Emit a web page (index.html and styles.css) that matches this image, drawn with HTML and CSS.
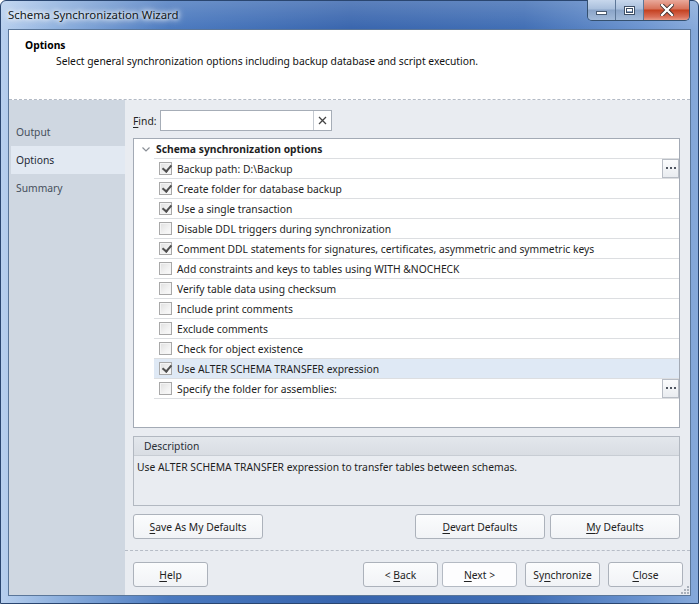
FILE: index.html
```html
<!DOCTYPE html>
<html>
<head>
<meta charset="utf-8">
<link rel="stylesheet" href="styles.css">
</head>
<body>
<div class="window">
  <div class="titlebar">
    <span class="title">Schema Synchronization Wizard</span>
    <div class="caption">
      <div class="cbtn cmin"><span class="min-glyph"></span></div>
      <div class="cbtn cmax"><span class="max-glyph"></span></div>
      <div class="cbtn cclose">
        <svg width="14" height="12" viewBox="0 0 14 12"><path d="M2 1 L12 11 M12 1 L2 11" stroke="#3a2a2a" stroke-width="4" stroke-linecap="square"/><path d="M2 1 L12 11 M12 1 L2 11" stroke="#ffffff" stroke-width="2.4" stroke-linecap="square"/></svg>
      </div>
    </div>
  </div>
  <div class="client">
    <div class="header">
      <div class="h-title">Options</div>
      <div class="h-sub">Select general synchronization options including backup database and script execution.</div>
    </div>
    <div class="body">
      <nav class="sidebar">
        <div class="nav-item">Output</div>
        <div class="nav-item selected">Options</div>
        <div class="nav-item">Summary</div>
      </nav>
      <div class="main">
        <div class="content">
          <div class="find-row">
            <label class="find-label"><u>F</u>ind:</label>
            <div class="find-box">
              <div class="find-input"></div>
              <div class="find-clear">
                <svg width="9" height="9" viewBox="0 0 9 9"><path d="M1 1 L8 8 M8 1 L1 8" stroke="#444" stroke-width="1.3"/></svg>
              </div>
            </div>
          </div>
          <div class="list">
            <div class="group-row">
              <svg class="chev" width="8" height="5" viewBox="0 0 8 5"><path d="M0.5 0.5 L4 4 L7.5 0.5" fill="none" stroke="#8a8f96" stroke-width="1.2"/></svg>
              <span class="group-title">Schema synchronization options</span>
            </div>
            <div class="opt"><span class="cb on"></span><span class="opt-text">Backup path: D:\Backup</span><span class="ellip"><svg width="10" height="2" viewBox="0 0 10 2"><g fill="#4f5560"><rect x="0" y="0" width="2" height="2"/><rect x="4" y="0" width="2" height="2"/><rect x="8" y="0" width="2" height="2"/></g></svg></span></div>
            <div class="opt"><span class="cb on"></span><span class="opt-text">Create folder for database backup</span></div>
            <div class="opt"><span class="cb on"></span><span class="opt-text">Use a single transaction</span></div>
            <div class="opt"><span class="cb"></span><span class="opt-text">Disable DDL triggers during synchronization</span></div>
            <div class="opt"><span class="cb on"></span><span class="opt-text">Comment DDL statements for signatures, certificates, asymmetric and symmetric keys</span></div>
            <div class="opt"><span class="cb"></span><span class="opt-text">Add constraints and keys to tables using WITH &amp;NOCHECK</span></div>
            <div class="opt"><span class="cb"></span><span class="opt-text">Verify table data using checksum</span></div>
            <div class="opt"><span class="cb"></span><span class="opt-text">Include print comments</span></div>
            <div class="opt"><span class="cb"></span><span class="opt-text">Exclude comments</span></div>
            <div class="opt"><span class="cb"></span><span class="opt-text">Check for object existence</span></div>
            <div class="opt hl"><span class="cb on"></span><span class="opt-text">Use ALTER SCHEMA TRANSFER expression</span></div>
            <div class="opt"><span class="cb"></span><span class="opt-text">Specify the folder for assemblies:</span><span class="ellip"><svg width="10" height="2" viewBox="0 0 10 2"><g fill="#4f5560"><rect x="0" y="0" width="2" height="2"/><rect x="4" y="0" width="2" height="2"/><rect x="8" y="0" width="2" height="2"/></g></svg></span></div>
          </div>
          <div class="desc">
            <div class="desc-head">Description</div>
            <div class="desc-body">Use ALTER SCHEMA TRANSFER expression to transfer tables between schemas.</div>
          </div>
          <div class="defaults-row">
            <div class="btn w130"><span><u>S</u>ave As My Defaults</span></div>
            <div class="spacer"></div>
            <div class="btn w130"><span><u>D</u>evart Defaults</span></div>
            <div class="btn w130"><span><u>M</u>y Defaults</span></div>
          </div>
        </div>
        <div class="footer">
          <div class="btn w75"><span><u>H</u>elp</span></div>
          <div class="spacer"></div>
          <div class="btn w75"><span>&lt; <u>B</u>ack</span></div>
          <div class="btn w75 default"><span><u>N</u>ext &gt;</span></div>
          <div class="btn w75 gap8"><span>Sy<u>n</u>chronize</span></div>
          <div class="btn w75 gap8"><span><u>C</u>lose</span></div>
          <svg class="grip" width="8" height="8" viewBox="0 0 8 8"><g fill="#a9b0ba"><rect x="6" y="0" width="2" height="2"/><rect x="3" y="3" width="2" height="2"/><rect x="6" y="3" width="2" height="2"/><rect x="0" y="6" width="2" height="2"/><rect x="3" y="6" width="2" height="2"/><rect x="6" y="6" width="2" height="2"/></g></svg>
        </div>
      </div>
    </div>
  </div>
</div>
</body>
</html>
```
FILE: styles.css
```css
* { box-sizing: border-box; }
html, body { margin: 0; padding: 0; background: #ffffff; }
body {
  font-family: "Noto Sans", "Open Sans", sans-serif;
  font-size: 10.3px;
  color: #1e1e1e;
}
u { text-decoration: underline; text-underline-offset: 2px; }

.window {
  width: 699px;
  height: 604px;
  padding: 28px 7px 7px 7px;
  display: flex;
  flex-direction: column;
  border: 1px solid #2a4670;
  border-radius: 6px 6px 0 0;
  background:
    linear-gradient(to bottom, rgba(255,255,255,0.18) 0px, rgba(255,255,255,0) 30px),
    linear-gradient(to right, #b7cfee 0%, #8fb1de 8%, #4a79bf 24%, #3764ad 50%, #3f6db4 75%, #6a93cf 92%, #86a9da 100%);
  position: relative;
}
.titlebar {
  position: absolute;
  left: 0; top: 0; right: 0;
  height: 28px;
}
.title {
  position: absolute;
  left: 7px;
  top: 6px;
  font-size: 11.4px;
  color: #101820;
  text-shadow: 0 0 8px #ffffff, 0 0 6px #ffffff, 0 0 4px #ffffff;
}
.caption {
  position: absolute;
  right: 8px;
  top: -1px;
  display: flex;
  height: 21px;
  border: 1px solid #34506f;
  border-top: none;
  border-radius: 0 0 5px 5px;
  overflow: hidden;
}
.cbtn {
  height: 20px;
  display: flex;
  align-items: center;
  justify-content: center;
}
.cmin, .cmax {
  width: 28px;
  background: linear-gradient(to bottom, #c7d7ec 0%, #a9bfdc 45%, #8aa4c8 50%, #a3bbd9 100%);
  border-right: 1px solid #5d7798;
}
.min-glyph {
  width: 11px; height: 4px;
  margin-top: 6px;
  background: #ffffff;
  border: 1px solid #485a70;
}
.max-glyph {
  width: 11px; height: 9px;
  background: transparent;
  border: 1px solid #3e4f66;
  box-shadow: inset 0 0 0 1px #ffffff, inset 0 0 0 2px #3e4f66;
  position: relative;
}
.max-glyph::after {
  content: "";
  position: absolute;
  left: 2px; top: 2px; right: 2px; bottom: 2px;
  border-top: 2px solid #ffffff;
}
.cclose {
  width: 45px;
  background: linear-gradient(to bottom, #e9a99b 0%, #d7725a 45%, #c4401f 50%, #d9705a 85%, #e79a86 100%);
}

.client {
  flex: 1;
  display: flex;
  flex-direction: column;
  border: 1px solid #5a7699;
  background: #e9ecf1;
}
.header {
  height: 70px;
  background: #ffffff;
  border-bottom: 1px dashed #b3bac5;
  padding: 7px 0 0 16px;
}
.h-title {
  font-weight: bold;
  line-height: 16px;
  color: #000;
}
.h-sub {
  line-height: 16px;
  padding-left: 31px;
  color: #111;
}
.body {
  flex: 1;
  display: flex;
}
.sidebar {
  width: 116px;
  background: #cfd7e1;
  padding-top: 18px;
}
.nav-item {
  height: 28px;
  line-height: 28px;
  padding-left: 7px;
  color: #46505c;
}
.nav-item.selected {
  margin-left: 2px;
  padding-left: 5px;
  background: #e2e9f2;
  color: #1f2a36;
}
.main {
  flex: 1;
  display: flex;
  flex-direction: column;
}
.content {
  height: 450px;
  padding: 10px 10px 0 8px;
  display: flex;
  flex-direction: column;
}
.find-row {
  display: flex;
  align-items: center;
  height: 21px;
}
.find-label { width: 27px; color: #222; }
.find-box {
  width: 172px;
  height: 21px;
  display: flex;
  border: 1px solid #a6adb7;
  background: #fff;
}
.find-input { flex: 1; }
.find-clear {
  width: 18px;
  border-left: 1px solid #c5cad1;
  display: flex;
  align-items: center;
  justify-content: center;
}
.list {
  margin-top: 7px;
  height: 290px;
  border: 1px solid #a3aab5;
  background: #ffffff;
}
.group-row {
  height: 20px;
  display: flex;
  align-items: center;
  margin-left: 20px;
  border-bottom: 1px solid #dcdee1;
  position: relative;
}
.chev {
  position: absolute;
  left: -12px;
  top: 8px;
}
.group-title {
  font-weight: bold;
  padding-left: 2px;
  color: #1e1e1e;
}
.opt {
  height: 20px;
  margin-left: 20px;
  display: flex;
  align-items: center;
  border-bottom: 1px solid #dcdee1;
}
.opt.hl { background: #dfe9f5; }
.cb {
  width: 13px;
  height: 13px;
  margin-left: 5px;
  margin-right: 5px;
  border: 1px solid #a8a8a8;
  background: linear-gradient(135deg, #dedede 0%, #f2f2f2 60%, #fbfbfb 100%);
  box-shadow: inset 0 0 0 1px #f4f4f4;
  position: relative;
}
.cb.on::after {
  content: "";
  position: absolute;
  top: 0px;
  left: 3.5px;
  width: 4px;
  height: 7px;
  border-right: 2px solid #505050;
  border-bottom: 2px solid #505050;
  transform: rotate(40deg);
  transform-origin: 50% 50%;
}
.opt-text { flex: 1; white-space: nowrap; }
.ellip {
  width: 17px;
  height: 19px;
  margin-top: -1px;
  border: 1px solid #b8bdc5;
  background: linear-gradient(to bottom, #fbfcfd, #e9ecf0);
  display: flex;
  align-items: center;
  justify-content: center;
  padding-bottom: 1px;
}
.desc {
  margin-top: 8px;
  height: 70px;
  border: 1px solid #b2b8c1;
  display: flex;
  flex-direction: column;
}
.desc-head {
  height: 19px;
  line-height: 18px;
  background: linear-gradient(to bottom, #e3e7ec, #d9dde3);
  border-bottom: 1px solid #c8cdd4;
  padding-left: 10px;
  color: #2a2f36;
}
.desc-body {
  padding: 3px 0 0 3px;
  line-height: 16px;
  color: #1e1e1e;
}
.defaults-row {
  margin-top: 8px;
  height: 25px;
  display: flex;
  gap: 5px;
}
.spacer { flex: 1; }
.btn {
  height: 25px;
  border: 1px solid #acb2bb;
  border-radius: 3px;
  background: linear-gradient(to bottom, #fbfcfd 0%, #f1f3f6 100%);
  display: flex;
  align-items: center;
  justify-content: center;
  color: #222;
  white-space: nowrap;
}
.w130 { width: 130px; }
.w75 { width: 75px; }
.btn.default { background: #fdfdfe; border-color: #b4bac3; margin-left: 4px; }
.gap8 { margin-left: 8px; }
.footer {
  flex: 1;
  border-top: 1px dashed #b6bcc6;
  padding: 11px 7px 0 8px;
  display: flex;
  align-items: flex-start;
  position: relative;
}
.grip {
  position: absolute;
  right: 1px;
  bottom: 1px;
}
```
